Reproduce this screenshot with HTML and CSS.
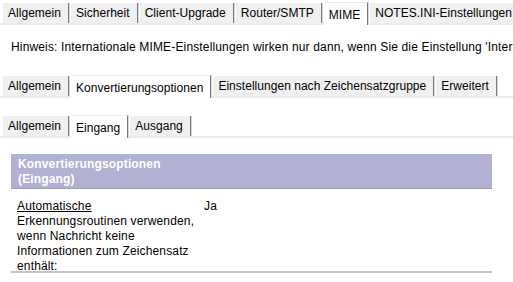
FILE: index.html
```html
<!DOCTYPE html>
<html lang="de">
<head>
<meta charset="utf-8">
<link rel="stylesheet" href="styles.css">
</head>
<body>
<div class="tabs top">
  <div class="tab">Allgemein</div>
  <div class="tab">Sicherheit</div>
  <div class="tab">Client-Upgrade</div>
  <div class="tab">Router/SMTP</div>
  <div class="tab active">MIME</div>
  <div class="tab">NOTES.INI-Einstellungen</div>
</div>
<p class="hint">Hinweis: Internationale MIME-Einstellungen wirken nur dann, wenn Sie die Einstellung 'Internationale MIME-Einstellungen für dieses Dokument verwenden' aktivieren.</p>
<div class="tabs sub first">
  <div class="tab">Allgemein</div>
  <div class="tab active">Konvertierungsoptionen</div>
  <div class="tab">Einstellungen nach Zeichensatzgruppe</div>
  <div class="tab">Erweitert</div>
</div>
<div class="tabs sub second">
  <div class="tab">Allgemein</div>
  <div class="tab active">Eingang</div>
  <div class="tab">Ausgang</div>
</div>
<div class="section">
  <div class="section-head">Konvertierungsoptionen<br>(Eingang)</div>
  <div class="row">
    <div class="label"><span class="u">Automatische </span><br>Erkennungsroutinen verwenden, wenn Nachricht keine Informationen zum Zeichensatz enthält:</div>
    <div class="value">Ja</div>
  </div>
</div>
</body>
</html>
```
FILE: styles.css
```css
html, body {
  margin: 0;
  padding: 0;
  background: #fff;
  overflow: hidden;
}
body {
  font-family: "Liberation Sans", Arial, sans-serif;
  font-size: 12px;
  letter-spacing: 0.15px;
  color: #000;
  width: 513px;
  height: 282px;
}
.tabs {
  display: flex;
  align-items: flex-end;
  padding-left: 3px;
  border-bottom: 2px solid #ececec;
  white-space: nowrap;
}
.tabs.top {
  margin-top: 2px;
}
.tabs.first {
  margin-top: 20px;
}
.tabs.second {
  margin-top: 17px;
}
.tab {
  flex: none;
  background: #f0f0f0;
  height: 20px;
  line-height: 21px;
  padding: 0 7px 0 5px;
  font-size: 12px;
  letter-spacing: 0.03px;
  border-right: 1px solid #7a7a7a;
  box-shadow: 1px 0 0 #d8d8d8;
  margin-right: 2px;
}
.tab.active {
  background: #fff;
  height: 22px;
  line-height: 24px;
  border-top: 1px solid #ececec;
  margin-bottom: -2px;
}
.hint {
  margin: 15px 0 0 11px;
  white-space: nowrap;
  font-size: 12px;
  line-height: 15px;
}
.section {
  margin: 16px 0 0 11px;
  width: 481px;
}
.section-head {
  background: #b1b1d3;
  color: #fff;
  font-weight: bold;
  padding: 3px 7px 1px 7px;
  line-height: 15px;
  box-shadow: 0 1px 0 #9e9eb8;
}
.row {
  display: flex;
  padding: 11px 0 0 6px;
  border-bottom: 2px solid #c4c4c4;
  line-height: 15px;
}
.label {
  width: 187px;
  flex: none;
  margin-bottom: -3px;
}
.u {
  text-decoration: underline;
}
.value {
  flex: 1;
}
```
